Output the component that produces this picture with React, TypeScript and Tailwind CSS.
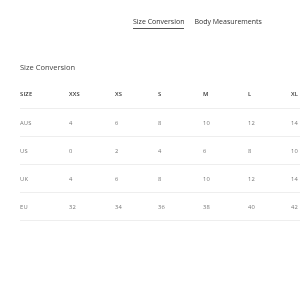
const sizes = ['XXS', 'XS', 'S', 'M', 'L', 'XL']

const rows: { region: string; values: number[] }[] = [
  { region: 'AUS', values: [4, 6, 8, 10, 12, 14] },
  { region: 'US', values: [0, 2, 4, 6, 8, 10] },
  { region: 'UK', values: [4, 6, 8, 10, 12, 14] },
  { region: 'EU', values: [32, 34, 36, 38, 40, 42] },
]

const cols = 'grid grid-cols-[49px_46px_43px_45px_45px_43px_45px]'

export default function App() {
  return (
    <div
      className="w-[300px] h-[300px] overflow-hidden bg-white text-[#555] antialiased will-change-transform"
      style={{ fontFamily: '"Open Sans", "Liberation Sans", sans-serif' }}
    >
      {/* タブ */}
      <div className="flex gap-[10px] pl-[133px] pt-[17px] text-[7px] text-[#333]">
        <div className="border-b border-[#555] pb-[1px] leading-[10px]">Size Conversion</div>
        <div className="leading-[10px]">Body Measurements</div>
      </div>

      <div className="pl-[20px] pt-[33px]">
        <h2 className="text-[7.5px] leading-[10px] text-[#444]">Size Conversion</h2>

        {/* 表 */}
        <div className="w-[340px] mt-[18px] text-[5.8px] tracking-[0.2px]">
          <div className={`${cols} h-[19px] items-start font-semibold text-[#333] border-b border-[#eee]`}>
            <div>SIZE</div>
            {sizes.map((s) => (
              <div key={s}>{s}</div>
            ))}
          </div>
          {rows.map((r) => (
            <div
              key={r.region}
              className={`${cols} h-[28px] items-center pt-[1px] border-b border-[#eee] text-[#777]`}
            >
              <div>{r.region}</div>
              {r.values.map((v, i) => (
                <div key={i}>{v}</div>
              ))}
            </div>
          ))}
        </div>
      </div>
    </div>
  )
}
